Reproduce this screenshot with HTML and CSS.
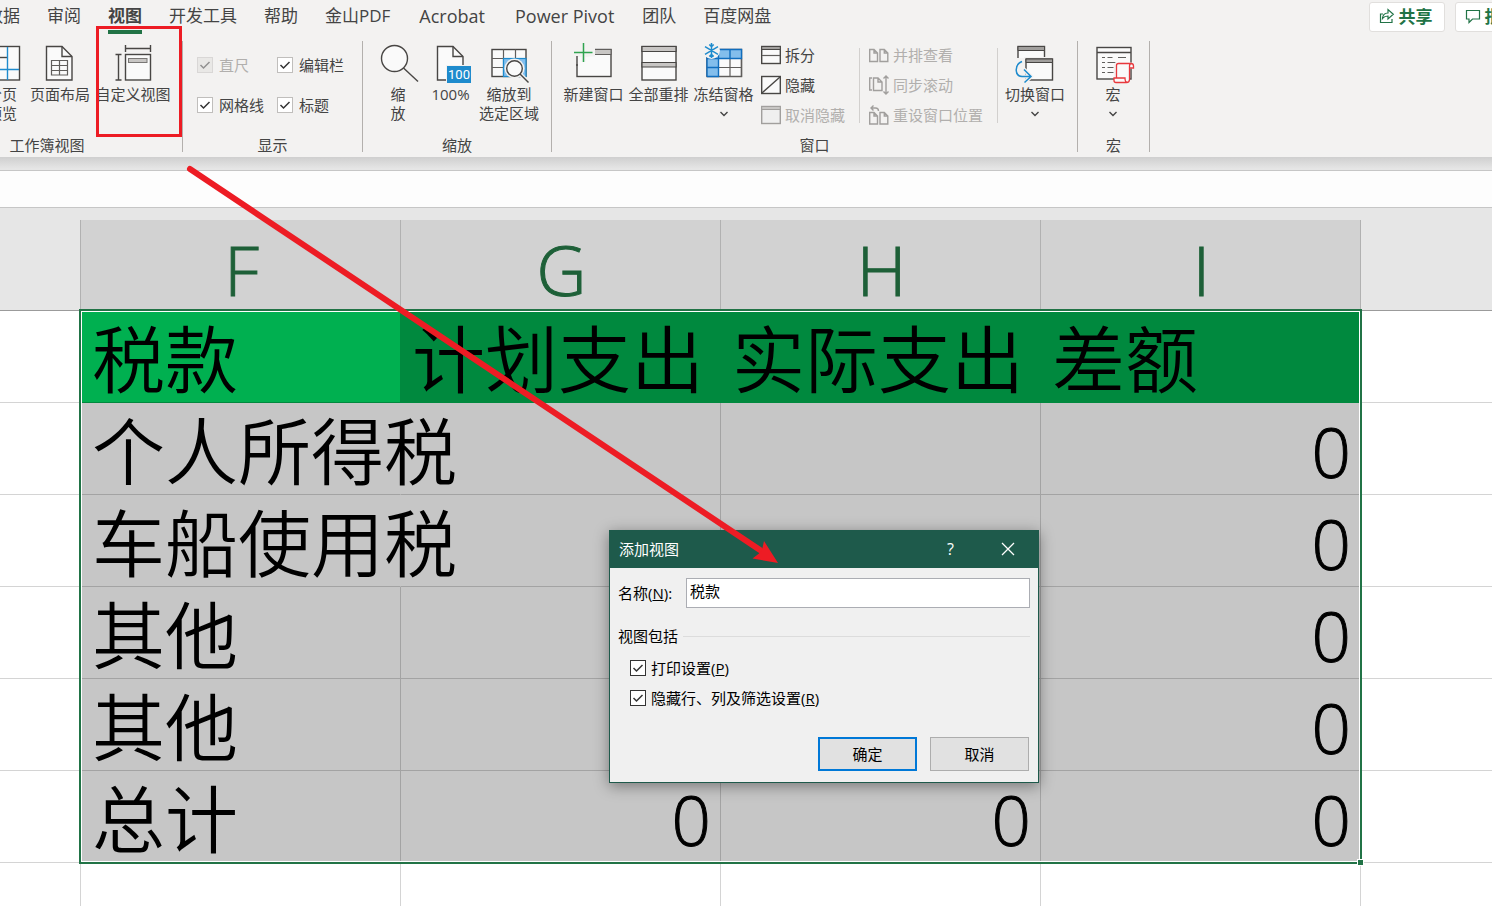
FILE: index.html
```html
<!DOCTYPE html>
<html lang="zh-CN">
<head>
<meta charset="utf-8">
<title>添加视图</title>
<link rel="stylesheet" href="styles.css">
</head>
<body>
<div class="app">
  <header class="ribbon">
    <div class="topbar">
      <nav class="tabs">
        <a class="tab" href="#">数据</a>
        <a class="tab" href="#">审阅</a>
        <a class="tab active" href="#">视图</a>
        <a class="tab" href="#">开发工具</a>
        <a class="tab" href="#">帮助</a>
        <a class="tab" href="#">金山PDF</a>
        <a class="tab latin" href="#">Acrobat</a>
        <a class="tab latin" href="#">Power Pivot</a>
        <a class="tab" href="#">团队</a>
        <a class="tab" href="#">百度网盘</a>
      </nav>
      <div class="share-area">
        <button class="share" type="button"><svg width="16" height="18" viewBox="0 0 16 18" fill="none" stroke="#217346" stroke-width="1.2"><path d="M4 7H1.500v8.500h11.500V12"/><path d="M3.500 11.500c.3-3.800 2.300-5.400 5.500-5.500V2.500l5.300 4.800L9 12V9c-2.500 0-4 .6-5.500 2.500z"/></svg>共享</button>
        <button class="share" type="button"><svg width="16" height="18" viewBox="0 0 16 18" fill="none" stroke="#217346" stroke-width="1.2"><path d="M1.500 3.500h13v8.500H7.500L4 15.500V12H1.500z"/></svg>批注</button>
      </div>
    </div>

    <div class="groups">
      <section class="group group-views">
        <div class="tools">
          <button class="big w48" type="button">
            <svg viewBox="0 0 40 40"><rect x="3" y="3.500" width="34.500" height="33.500" class="paper"/><path class="line" d="M3 14.500h22"/><path class="blue-line" d="M25.500 4v33M3 26.500h34"/></svg>
            <span>分页<br>预览</span></button>
          <button class="big w68" type="button">
            <svg viewBox="0 0 40 40"><path class="paper" d="M6.500 3.500H22L32 13.500V37H6.500z"/><path class="line" d="M22 3.500v10h10"/><path class="thin" d="M11.500 17.500h16v14.500h-16zM11.500 22.500h16M11.500 27.500h16M19.500 17.500v14.500"/></svg>
            <span>页面布局</span></button>
          <button class="big w78" type="button">
            <svg viewBox="0 0 40 40"><rect class="paper" x="12.500" y="11.500" width="25" height="25.500"/><rect x="15.500" y="15.500" width="18.500" height="4" fill="#c8c6c4" stroke="#797775"/><path class="line" d="M12.500 5.500h25M12.500 2v7M37.500 2v7M5.500 11.500V37M2.500 11.500h6M2.500 37h6"/></svg>
            <span>自定义视图</span></button>
        </div>
        <div class="caption">工作簿视图</div>
      </section>

      <section class="group group-show">
        <div class="checks">
          <label class="check off"><input type="checkbox" checked disabled><span>直尺</span></label>
          <label class="check"><input type="checkbox" checked><span>编辑栏</span></label>
          <label class="check"><input type="checkbox" checked><span>网格线</span></label>
          <label class="check"><input type="checkbox" checked><span>标题</span></label>
        </div>
        <div class="caption">显示</div>
      </section>

      <section class="group group-zoom">
        <div class="tools">
          <button class="big w48" type="button">
            <svg viewBox="0 0 40 40"><circle class="paper" cx="16.500" cy="15.500" r="13"/><path class="line" d="M25.500 25L40 38.500"/></svg>
            <span>缩<br>放</span></button>
          <button class="big w57" type="button">
            <svg viewBox="0 0 40 40"><path class="paper" d="M6.500 3.500H22L32 13.500V37H6.500z"/><path class="line" d="M22 3.500v10h10"/><rect x="15" y="22" width="25" height="18" fill="#f3f2f1"/><rect x="16" y="23" width="24" height="17" fill="#1e8bcd"/><text x="28" y="36" class="hundred">100</text></svg>
            <span>100%</span></button>
          <button class="big w60" type="button">
            <svg viewBox="0 0 40 40"><rect class="paper" x="3" y="6.500" width="34" height="27"/><path class="thin" d="M14.500 6.500v27M26.500 6.500v9M3 15.500h34M3 24.500h11"/><rect x="14.500" y="15.500" width="22.500" height="18" fill="#83beec" stroke="#1e8bcd" stroke-width="1.200"/><circle cx="25.500" cy="25.500" r="10" fill="#f3f2f1"/><path d="M31 31L39 39" stroke="#f3f2f1" stroke-width="4"/><circle class="paper" cx="25.500" cy="25.500" r="7.800"/><path class="line" d="M31 31L39.500 39.500"/></svg>
            <span>缩放到<br>选定区域</span></button>
        </div>
        <div class="caption">缩放</div>
      </section>

      <section class="group group-window">
        <div class="tools">
          <button class="big w65" type="button">
            <svg viewBox="0 0 40 40"><rect class="paper" x="3" y="6.500" width="34" height="27"/><rect x="20.500" y="6.500" width="16.500" height="5" fill="#c8c6c4" stroke="#605e5c"/><path d="M0 0h21v13.500H14.500V21H0z" fill="#f3f2f1"/><path d="M3 14v7h12v-7z" fill="#fafafa"/><path class="line" d="M3 13v10"/><path d="M0 9.500h18.500M9.500 0v19" stroke="#f3f2f1" stroke-width="4"/><path d="M0 9.500h18.500M9.500 0v19" stroke="#2fa34f" stroke-width="1.500"/></svg>
            <span>新建窗口</span></button>
          <button class="big w65" type="button">
            <svg viewBox="0 0 40 40"><rect class="paper" x="3" y="3.500" width="34" height="33.500"/><path d="M3 3.500h34v5H3zM3 19.500h34v4.500H3z" fill="#c8c6c4" stroke="#484644" stroke-width="1.200"/></svg>
            <span>全部重排</span></button>
          <button class="big w65" type="button">
            <svg viewBox="0 0 40 40"><rect class="paper" x="3" y="6.500" width="34.500" height="27"/><path d="M3 6.500h34.500v9H14.500v18H3z" fill="#83beec"/><path class="thin" d="M26 16v17.500M15 24.500h22.500M14.500 33.500h23v-18"/><path d="M3 33.500v-27h34.500v9H3M14.500 6.500v27H3M26 6.500v9M3 24.500h11.500" fill="none" stroke="#106ebe" stroke-width="1.400"/><circle cx="7.500" cy="7.500" r="8.500" fill="#f3f2f1"/><path d="M7.500 0v15M1 3.700l13 7.600M14 3.700L1 11.300M5.300 1.500l2.200 2.200 2.200-2.200M5.300 13.500l2.200-2.200 2.200 2.200" fill="none" stroke="#1e8bcd" stroke-width="1.500"/></svg>
            <span>冻结窗格</span><svg class="chev" viewBox="0 0 10 6"><path d="M1.500 1L5 4.500 8.500 1"/></svg></button>
          <div class="stack">
            <button class="small" type="button"><svg viewBox="0 0 20 20"><rect class="paper" x=".7" y="1.500" width="18.600" height="17"/><path d="M.7 1.500h18.600v3H.7z" fill="#a19f9d" stroke="#484644"/><path class="thin" d="M1 10.500h18"/></svg>拆分</button>
            <button class="small" type="button"><svg viewBox="0 0 20 20"><rect class="paper" x=".7" y="1.500" width="18.600" height="17"/><path class="line" d="M1 18L19 2"/></svg>隐藏</button>
            <button class="small" type="button" disabled><svg viewBox="0 0 20 20"><rect x=".7" y="1.500" width="18.600" height="17" fill="#efefef" stroke="#a19f9d" stroke-width="1.400"/><path d="M.7 1.500h18.600v3H.7z" fill="#c8c6c4" stroke="#a19f9d"/></svg>取消隐藏</button>
          </div>
          <div class="stack divided">
            <button class="small" type="button" disabled><svg class="dim" viewBox="0 0 20 20"><path d="M.7 4.500h4.300l3.500 3.500v8.500H.7zM5 4.500V8h3.500M11 4.500h4.300l3.500 3.500v8.500H11zM15.300 4.500V8h3.500"/></svg>并排查看</button>
            <button class="small" type="button" disabled><svg class="dim" viewBox="0 0 20 20"><path d="M3 3H.7v12H3M4.500 3h4.500l4 4v8.500H4.500zM9 3v4h4M17 1v18M14.500 3.500L17 1l2.500 2.500M14.500 16.500L17 19l2.500-2.500"/></svg>同步滚动</button>
            <button class="small" type="button" disabled><svg class="dim" viewBox="0 0 20 20"><path d="M.7 7.500h4.300l3.500 3.500v8H.7zM5 7.500V11h3.500M11 7.500h4.300l3.500 3.500v8H11zM15.300 7.500V11h3.500M4.500.5L2 3l2.500 2.500M2 3h4.500c2 0 3 1 3 3"/></svg>重设窗口位置</button>
          </div>
          <button class="big w74" type="button">
            <svg viewBox="0 0 40 40"><rect class="paper" x="3" y="3.500" width="26.500" height="19"/><path d="M3 3.500h26.500v4H3z" fill="#a19f9d" stroke="#484644"/><path d="M9 14h31v25H9z" fill="#f3f2f1"/><path d="M0 15h9v9H0z" fill="#f3f2f1"/><rect class="paper" x="11" y="16" width="26.500" height="21"/><path d="M11 16h26.500v3.500H11z" fill="#a19f9d" stroke="#484644"/><path d="M7 18.500C-1 22-.5 33 7 33.500h9M9 26.500l7 7-6.500 6" fill="none" stroke="#f3f2f1" stroke-width="4"/><path d="M7 18.500C-1 22-.5 33 7 33.500h9M9 26.500l7 7-6.500 6" fill="none" stroke="#1e8bcd" stroke-width="1.500"/></svg>
            <span>切换窗口</span><svg class="chev" viewBox="0 0 10 6"><path d="M1.500 1L5 4.500 8.500 1"/></svg></button>
        </div>
        <div class="caption">窗口</div>
      </section>

      <section class="group group-macro">
        <div class="tools">
          <button class="big w60" type="button">
            <svg viewBox="0 0 40 40"><rect class="paper" x="4" y="4.500" width="34" height="31.500"/><path class="line" d="M4 9.500h34"/><path class="thin" d="M9 14.500h3M14.500 14.500h5M25 14.500h8M9 19.500h3M14.500 19.500h8M9 24.500h3M14.500 24.500h6M9 29.500h3M14.500 29.500h6"/><path d="M21 39V21.500q0-2 2-2h17v6h-4V40z" fill="#f3f2f1"/><path d="M23.500 35V22.500q0-2 2-2H38q2.500 0 2.500 2.500v2h-4v11.500q0 3-3 3H23q-2 0-2-2V35h11q0 4 2 4.300M36.500 25v-2q0-2.500 2-2.500" fill="#fafafa" stroke="#e8383d" stroke-width="1.300"/></svg>
            <span>宏</span><svg class="chev" viewBox="0 0 10 6"><path d="M1.500 1L5 4.500 8.500 1"/></svg></button>
        </div>
        <div class="caption">宏</div>
      </section>
    </div>
  </header>

  <div class="formula-wrap"><div class="formula-bar"></div></div>

  <main class="sheet">
    <table class="grid">
      <colgroup><col class="c-edge"><col class="c-main"><col class="c-main"><col class="c-main"><col class="c-main"><col></colgroup>
      <thead>
        <tr><td></td><th>F</th><th>G</th><th>H</th><th>I</th><td class="last"></td></tr>
      </thead>
      <tbody>
        <tr class="title"><td></td><td class="s first">税款</td><td class="s">计划支出</td><td class="s">实际支出</td><td class="s">差额</td><td></td></tr>
        <tr><td></td><td class="s spill">个人所得税</td><td class="s"></td><td class="s"></td><td class="s num">0</td><td></td></tr>
        <tr><td></td><td class="s spill">车船使用税</td><td class="s"></td><td class="s"></td><td class="s num">0</td><td></td></tr>
        <tr><td></td><td class="s">其他</td><td class="s"></td><td class="s"></td><td class="s num">0</td><td></td></tr>
        <tr><td></td><td class="s">其他</td><td class="s"></td><td class="s"></td><td class="s num">0</td><td></td></tr>
        <tr><td></td><td class="s">总计</td><td class="s num">0</td><td class="s num">0</td><td class="s num">0</td><td></td></tr>
        <tr class="below"><td></td><td></td><td></td><td></td><td></td><td></td></tr>
      </tbody>
    </table>
    <div class="selection"><i class="handle"></i></div>
  </main>

  <form class="dialog" role="dialog" aria-labelledby="dlg-title">
    <div class="dlg-head">
      <span id="dlg-title">添加视图</span>
      <button class="dlg-icon" type="button" aria-label="帮助">?</button>
      <button class="dlg-icon" type="button" aria-label="关闭"><svg width="14" height="14" viewBox="0 0 14 14"><path d="M1 1l12 12M13 1L1 13" stroke="#fff" stroke-width="1.300"/></svg></button>
    </div>
    <div class="dlg-body">
      <div class="name-row"><label for="view-name">名称(<u>N</u>):</label><input id="view-name" type="text" value="税款"></div>
      <fieldset>
        <legend>视图包括</legend>
        <label class="check"><input type="checkbox" checked><span>打印设置(<u>P</u>)</span></label>
        <label class="check"><input type="checkbox" checked><span>隐藏行、列及筛选设置(<u>R</u>)</span></label>
      </fieldset>
      <div class="dlg-actions"><button class="ok" type="button">确定</button><button type="button">取消</button></div>
    </div>
  </form>

  <svg class="marks" width="1492" height="906" viewBox="0 0 1492 906">
    <rect x="97.500" y="27.500" width="83" height="108" fill="none" stroke="#ed1c24" stroke-width="3"/>
    <path d="M190 169L760 550" stroke="#ed1c24" stroke-width="6" stroke-linecap="round"/>
    <path d="M778 563L752.500 558.500 759 553.500 762 550 764 541z" fill="#ed1c24" />
  </svg>
</div>
</body>
</html>
```
FILE: styles.css
```css
* { box-sizing: border-box; }

body {
  margin: 0;
  font-family: "Open Sans", "Noto Sans CJK SC", sans-serif;
  font-size: 15px;
  color: #444;
}

button, input { font: inherit; color: inherit; }
button { background: none; border: 0; padding: 0; }

.app {
  position: relative;
  display: flex;
  flex-direction: column;
  height: 100vh;
  overflow: hidden;
  background: #e6e6e6;
}

/* Ribbon */
.ribbon { background: #f3f2f1; flex: none; padding-bottom: 5px; overflow: hidden; }

.topbar { display: flex; justify-content: space-between; height: 41px; }

.tabs { display: flex; gap: 27px; margin-left: -14px; font-size: 17px; }
.tab {
  height: 34px;
  line-height: 32px;
  color: #444;
  text-decoration: none;
  white-space: nowrap;
}
.tab.active { font-weight: 700; border-bottom: 4px solid #217346; }
.tab.latin { padding: 0 1px 0 2px; font-size: 18px; }

.share-area { display: flex; gap: 10px; padding-top: 2px; margin-right: -39px; }
.share {
  display: flex;
  align-items: center;
  justify-content: center;
  gap: 4px;
  width: 76px;
  height: 30px;
  padding: 0 3px 3px 0;
  background: #fff;
  border: 1px solid #e1dfdd;
  border-radius: 3px;
  color: #217346;
  font-size: 17px;
  font-weight: 700;
  white-space: nowrap;
}

.groups { display: flex; height: 111px; }
.group {
  display: flex;
  flex-direction: column;
  justify-content: space-between;
  flex: none;
  border-right: 1px solid #b3b0ad;
}
.group-views { width: 271px; margin-left: -88px; }
.group-views .tools { justify-content: flex-end; padding-right: 10px; }
.group-show { width: 180px; }
.group-zoom { width: 189px; }
.group-zoom .tools { padding-left: 11px; }
.group-window { width: 526px; }
.group-window .tools { padding-left: 9px; }
.group-macro { width: 72px; }
.group-macro .tools { padding-left: 5px; }

.caption { text-align: center; line-height: 14px; }
.tools { display: flex; padding-top: 2px; }

.big {
  display: flex;
  flex-direction: column;
  align-items: center;
  gap: 2px;
  line-height: 19px;
  white-space: nowrap;
}
.big svg { width: 40px; height: 40px; overflow: visible; }
.big .chev { width: 10px; height: 6px; margin-top: 5px; fill: none; stroke: #444; stroke-width: 1.4; }
.w48 { width: 48px; }
.w57 { width: 57px; }
.w60 { width: 60px; }
.w65 { width: 65px; }
.w68 { width: 68px; }
.w74 { width: 74px; }
.w78 { width: 78px; }

.paper { fill: #fafafa; stroke: #484644; stroke-width: 1.4; }
.line { fill: none; stroke: #484644; stroke-width: 1.4; }
.thin { fill: none; stroke: #605e5c; stroke-width: 1.2; }
.blue-line { fill: none; stroke: #1e8bcd; stroke-width: 1.4; }
.dim { fill: none; stroke: #a19f9d; stroke-width: 1.4; }
.hundred { fill: #fff; font-family: Roboto, sans-serif; font-size: 13px; text-anchor: middle; }

.stack { display: flex; flex-direction: column; padding-left: 5px; }
.stack.divided {
  height: 75px;
  margin: 5px 0 0 14px;
  padding: 0 14px 0 9px;
  border-left: 1px solid #d2d0ce;
  border-right: 1px solid #d2d0ce;
}
.small {
  display: flex;
  align-items: center;
  gap: 4px;
  height: 30px;
  flex: none;
  line-height: 20px;
  white-space: nowrap;
}
.small:first-child { margin-top: -3px; }
.stack.divided .small:first-child { margin-top: -8px; }
.small svg { width: 20px; height: 20px; }
.small:disabled { color: #b1afad; }

.check { display: flex; align-items: center; gap: 6px; white-space: nowrap; }
.check span { padding-bottom: 2px; }
.checks {
  display: grid;
  grid-template-columns: 80px 80px;
  grid-auto-rows: 40px;
  padding: 4px 0 0 14px;
}
.check.off { color: #b1afad; }
.check input {
  appearance: none;
  flex: none;
  width: 16px;
  height: 16px;
  margin: 0;
  border: 1px solid #c0bebc;
  background: #fff url("data:image/svg+xml,%3Csvg xmlns='http://www.w3.org/2000/svg' viewBox='0 0 14 14'%3E%3Cpath d='M2.500 7l3 3 6-6' fill='none' stroke='%23333' stroke-width='1.500'/%3E%3C/svg%3E");
}
.check.off input { background-color: #e1dfdd; opacity: .5; }

/* Formula bar */
.formula-wrap {
  flex: none;
  padding: 13px 0 12px;
  background: linear-gradient(#cfcfcf, #e6e6e6 12px);
}
.formula-bar {
  height: 38px;
  background: #fdfdfd;
  border-top: 1px solid #c6c6c6;
  border-bottom: 1px solid #c6c6c6;
}

/* Sheet */
.sheet { position: relative; flex: 1; min-height: 0; }
.grid {
  width: 100%;
  table-layout: fixed;
  border-collapse: separate;
  border-spacing: 0;
  font-size: 73px;
  font-weight: 350;
  line-height: 80px;
  color: #000;
}
.c-edge { width: 81px; }
.c-main { width: 320px; }
.grid th, .grid td {
  height: 92px;
  padding: 5px 9px 0 11px;
  border-right: 1px solid #d4d4d4;
  border-bottom: 1px solid #d4d4d4;
  background: #fff;
  text-align: left;
  white-space: nowrap;
}
.grid thead td, .grid thead th { height: 91px; border-color: #b1b1b1; border-bottom-color: #9b9b9b; background: #e6e6e6; }
.grid thead th {
  padding-top: 8px;
  background: #d2d2d2;
  color: #1e6038;
  font-size: 69px;
  font-weight: 300;
  -webkit-text-stroke: 1px #1e6038;
  text-align: center;
}
.grid thead .last, .grid td:last-child { border-right: 0; }
.grid tbody td:first-child { border-right-color: #fff; }
.grid tbody .below td:first-child { border-right-color: #d4d4d4; }
.grid tbody .s { background: #c6c6c6; border-color: #a3a3a3; }
.grid tbody .title .s { background: #00893e; border-color: #00893e; }
.grid tbody .title .first { background: #00b050; border-right-color: #00893e; }
.grid tbody .spill { position: relative; border-right-color: #c6c6c6; }
.grid tbody .num {
  font-size: 69px;
  font-weight: 300;
  -webkit-text-stroke: 1px #000;
  text-align: right;
}

.selection {
  position: absolute;
  left: 79px;
  top: 89px;
  width: 1283px;
  height: 555px;
  border: 2px solid #217346;
  box-shadow: inset 0 0 0 1px #fff;
}
.handle {
  position: absolute;
  right: -4px;
  bottom: -4px;
  width: 7px;
  height: 7px;
  background: #217346;
  border: 1px solid #fff;
}

/* Dialog */
.dialog {
  position: absolute;
  left: 609px;
  top: 530px;
  width: 430px;
  border: 1px solid #1e5a4b;
  background: #f0f0f0;
  color: #000;
  box-shadow: 0 3px 14px rgba(0, 0, 0, .4);
}
.dlg-head {
  display: flex;
  align-items: center;
  height: 37px;
  padding: 0 2px 2px 9px;
  background: #1e5a4b;
  color: #fff;
}
#dlg-title { flex: 1; }
.dlg-icon { display: flex; align-items: center; justify-content: center; width: 57px; height: 35px; font-size: 16px; }
.dlg-body { padding: 10px 8px 11px; }
.name-row { display: flex; align-items: center; justify-content: space-between; }
.name-row label { padding-bottom: 2px; }
.name-row input {
  width: 344px;
  height: 30px;
  padding: 0 3px 6px;
  border: 1px solid #abadb3;
  background: #fff;
}
fieldset {
  margin: 18px 0 0;
  padding: 7px 0 0 12px;
  border: 0;
  border-top: 1px solid #dcdcdc;
}
legend { margin-left: -12px; padding: 0 5px 0 0; line-height: 20px; }
fieldset .check { height: 30px; gap: 5px; }
fieldset .check input { border-color: #333; }
.dlg-actions { display: flex; justify-content: flex-end; gap: 13px; padding: 24px 1px 0 0; }
.dlg-actions button { width: 99px; height: 34px; padding-bottom: 2px; border: 1px solid #adadad; background: #e1e1e1; }
.dlg-actions .ok { border: 2px solid #0078d7; }

.marks { position: absolute; left: 0; top: 0; pointer-events: none; }
```
